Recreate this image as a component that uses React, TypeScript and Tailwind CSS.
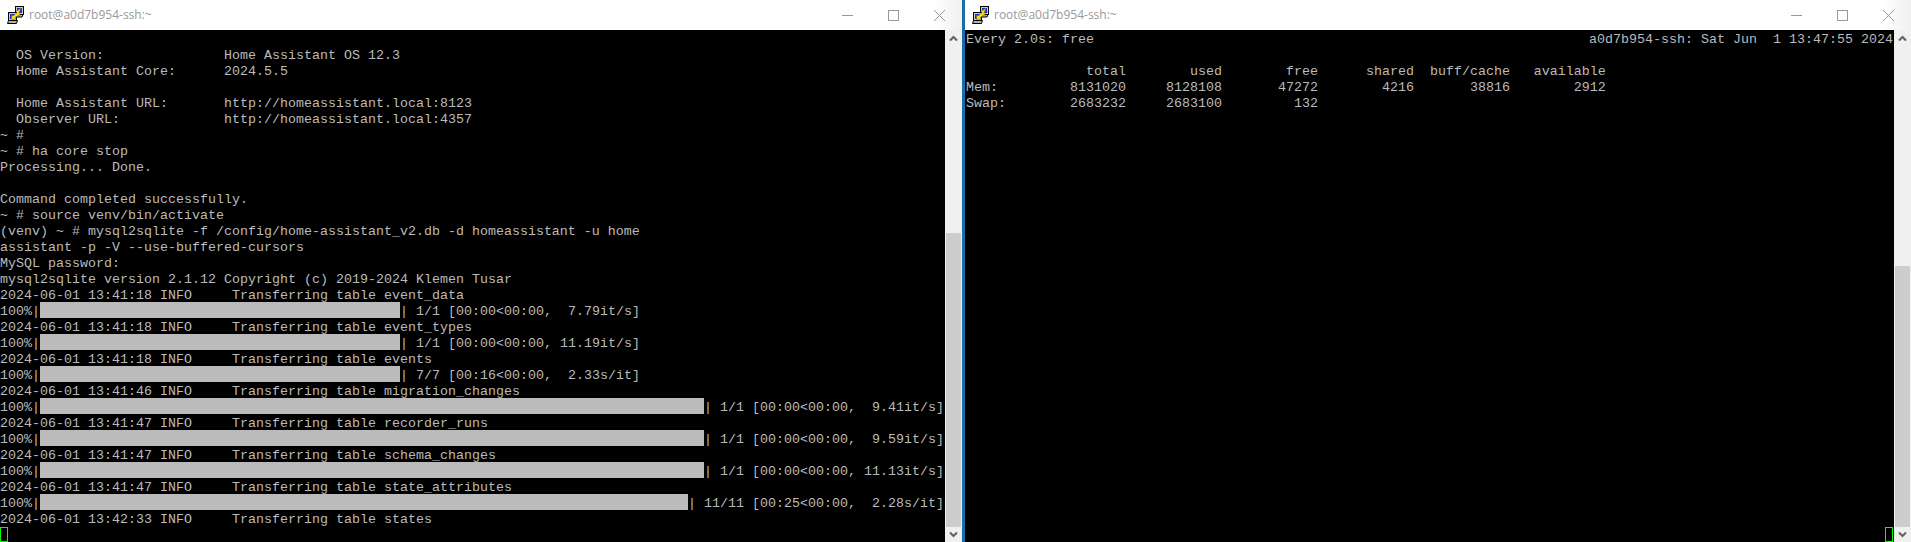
import React from "react";

const PuttyIcon = () => (
  <svg width="20" height="20" viewBox="0 0 20 20" className="shrink-0">
    <rect x="9.5" y="1.5" width="8" height="8" fill="#c8c8e0" stroke="#000" />
    <rect x="11" y="3" width="5" height="5" fill="#1c2fd0" />
    <path d="M10 9.5h7l-1 2.5h-7z" fill="#b0b0b0" stroke="#000" />
    <rect x="2.5" y="7.5" width="8" height="8" fill="#c8c8e0" stroke="#000" />
    <rect x="4" y="9" width="5" height="5" fill="#1c2fd0" />
    <path d="M2.5 15.5h9l-1 3h-9z" fill="#b0b0b0" stroke="#000" />
    <path d="M15 3l-5 3.5 1 1-4 3.5-1.5-1v4.500l4.500-.5-1-1.500 5-3-1-1z" fill="#f4e11c" stroke="#6a6000" strokeWidth="0.5" />
  </svg>
);

const WindowButtons = () => (
  <div className="flex h-full text-[#999]">
    <div className="flex w-[46px] items-center justify-center">
      <svg width="11" height="11" viewBox="0 0 11 11"><path d="M0 5.500h11" stroke="currentColor" /></svg>
    </div>
    <div className="flex w-[46px] items-center justify-center">
      <svg width="11" height="11" viewBox="0 0 11 11"><rect x="0.5" y="0.500" width="10" height="10" fill="none" stroke="currentColor" /></svg>
    </div>
    <div className="flex w-[46px] items-center justify-center">
      <svg width="11" height="11" viewBox="0 0 11 11"><path d="M0 0l11 11M11 0L0 11" stroke="currentColor" /></svg>
    </div>
  </div>
);

const TitleBar = () => (
  <div className="flex h-[30px] shrink-0 items-center justify-between bg-gradient-to-r from-white from-[97%] to-[#f0f0f0] pl-[6px]">
    <div className="flex items-center gap-[3px]">
      <PuttyIcon />
      <span className="font-['Open_Sans',sans-serif] text-[12px] text-[#999]">root@a0d7b954-ssh:~</span>
    </div>
    <WindowButtons />
  </div>
);

const Scrollbar = ({ spacer }: { spacer: string }) => (
  <div className="flex w-[17px] shrink-0 flex-col bg-[#f0f0f0]">
    <div className="flex h-[17px] items-center justify-center">
      <svg width="9" height="7" viewBox="0 0 9 7"><path d="M1 5.500l3.500-3.500 3.500 3.500" fill="none" stroke="#606060" strokeWidth="2" /></svg>
    </div>
    <div className={spacer} />
    <div className="mx-px flex-1 bg-[#cdcdcd]" />
    <div className="flex h-[15px] items-center justify-center">
      <svg width="9" height="7" viewBox="0 0 9 7"><path d="M1 1.500l3.500 3.500 3.500-3.500" fill="none" stroke="#606060" strokeWidth="2" /></svg>
    </div>
  </div>
);

const Line = ({ text = "" }: { text?: string }) => <div className="h-4 whitespace-pre">{text}</div>;

const BarLine = ({ bar, text }: { bar: string; text: string }) => (
  <div className="flex h-4 whitespace-pre">
    <span>100%|</span>
    <span className={bar} />
    <span>{text}</span>
  </div>
);

const Cursor = () => <div className="mt-px h-[15px] w-2 border border-[#00ff00]" />;

const terminal = "font-['Liberation_Mono',monospace] text-[13.333px] leading-[20px] text-[#bbbbbb]";

export default function App() {
  return (
    <div className="flex h-[542px] w-[1911px] overflow-hidden bg-black">
      <div className="flex w-[962px] shrink-0 flex-col">
        <TitleBar />
        <div className="flex flex-1">
          <div className={`flex-1 overflow-hidden bg-black ${terminal}`}>
            <Line />
            <Line text="  OS Version:               Home Assistant OS 12.3" />
            <Line text="  Home Assistant Core:      2024.5.5" />
            <Line />
            <Line text="  Home Assistant URL:       http://homeassistant.local:8123" />
            <Line text="  Observer URL:             http://homeassistant.local:4357" />
            <Line text="~ #" />
            <Line text="~ # ha core stop" />
            <Line text="Processing... Done." />
            <Line />
            <Line text="Command completed successfully." />
            <Line text="~ # source venv/bin/activate" />
            <Line text="(venv) ~ # mysql2sqlite -f /config/home-assistant_v2.db -d homeassistant -u home" />
            <Line text="assistant -p -V --use-buffered-cursors" />
            <Line text="MySQL password:" />
            <Line text="mysql2sqlite version 2.1.12 Copyright (c) 2019-2024 Klemen Tusar" />
            <Line text="2024-06-01 13:41:18 INFO     Transferring table event_data" />
            <BarLine bar="w-[360px] bg-[#bbbbbb]" text="| 1/1 [00:00<00:00,  7.79it/s]" />
            <Line text="2024-06-01 13:41:18 INFO     Transferring table event_types" />
            <BarLine bar="w-[360px] bg-[#bbbbbb]" text="| 1/1 [00:00<00:00, 11.19it/s]" />
            <Line text="2024-06-01 13:41:18 INFO     Transferring table events" />
            <BarLine bar="w-[360px] bg-[#bbbbbb]" text="| 7/7 [00:16<00:00,  2.33s/it]" />
            <Line text="2024-06-01 13:41:46 INFO     Transferring table migration_changes" />
            <BarLine bar="w-[664px] bg-[#bbbbbb]" text="| 1/1 [00:00<00:00,  9.41it/s]" />
            <Line text="2024-06-01 13:41:47 INFO     Transferring table recorder_runs" />
            <BarLine bar="w-[664px] bg-[#bbbbbb]" text="| 1/1 [00:00<00:00,  9.59it/s]" />
            <Line text="2024-06-01 13:41:47 INFO     Transferring table schema_changes" />
            <BarLine bar="w-[664px] bg-[#bbbbbb]" text="| 1/1 [00:00<00:00, 11.13it/s]" />
            <Line text="2024-06-01 13:41:47 INFO     Transferring table state_attributes" />
            <BarLine bar="w-[648px] bg-[#bbbbbb]" text="| 11/11 [00:25<00:00,  2.28s/it]" />
            <Line text="2024-06-01 13:42:33 INFO     Transferring table states" />
            <Cursor />
          </div>
          <Scrollbar spacer="h-[186px]" />
        </div>
      </div>

      <div className="w-[3px] shrink-0 bg-[#1a6ea8]" />

      <div className="flex flex-1 flex-col">
        <TitleBar />
        <div className="flex flex-1">
          <div className={`flex flex-1 flex-col overflow-hidden bg-black pl-px ${terminal}`}>
            <div className="flex h-4 justify-between whitespace-pre pr-px">
              <span>Every 2.0s: free</span>
              <span>a0d7b954-ssh: Sat Jun  1 13:47:55 2024</span>
            </div>
            <Line />
            <Line text="               total        used        free      shared  buff/cache   available" />
            <Line text="Mem:         8131020     8128108       47272        4216       38816        2912" />
            <Line text="Swap:        2683232     2683100         132" />
            <div className="flex flex-1 items-end justify-end pr-px">
              <Cursor />
            </div>
          </div>
          <Scrollbar spacer="h-[219px]" />
        </div>
      </div>
    </div>
  );
}
